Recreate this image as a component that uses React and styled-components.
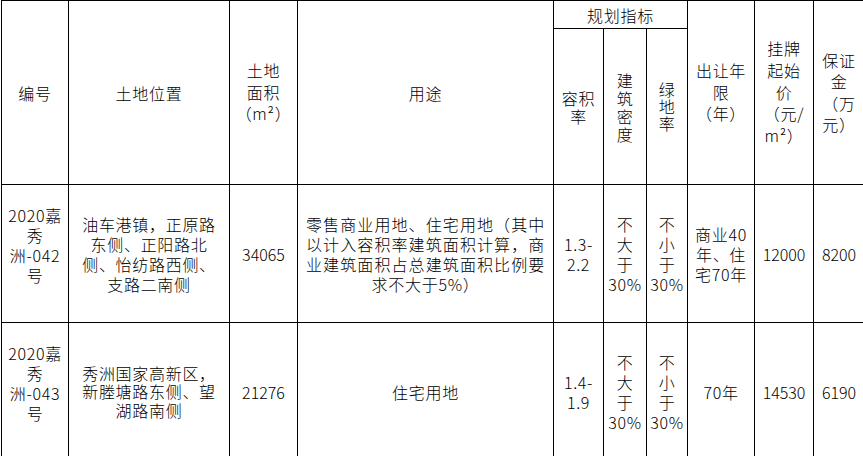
import React from 'react';
import styled, { createGlobalStyle, css } from 'styled-components';

const GlobalStyle = createGlobalStyle`
  html, body {
    margin: 0;
    padding: 0;
    background: #fff;
    overflow: hidden;
  }
  body {
    font-family: "Noto Sans CJK SC", "Liberation Sans", sans-serif;
    color: #000;
  }
`;

const Page = styled.div`
  padding-left: 1px;
`;

const Table = styled.table`
  border-collapse: collapse;
  table-layout: fixed;
  width: 863px;
  font-size: 16px;
  font-weight: 300;
  letter-spacing: 0.7px;
`;

const Row = styled.tr`
  height: ${(p) => p.$h}px;
`;

const cellBase = css`
  border: 1px solid #000;
  padding: 0 ${(p) => p.$pad ?? 3}px ${(p) => (p.$lift ? 18 : 0)}px;
  text-align: center;
  vertical-align: middle;
  line-height: ${(p) => p.$lh ?? 20}px;
  letter-spacing: ${(p) => (p.$num ? 0 : 0.7)}px;
  font-weight: 300;
`;

const Head = styled.th`
  ${cellBase}
`;

const Cell = styled.td`
  ${cellBase}
  ${(p) =>
    p.$justify &&
    css`
      text-align: justify;
      text-align-last: center;
    `}
`;

/* one line of a cell that the source breaks by hand */
const Line = styled.span`
  display: block;
  white-space: nowrap;
  overflow: visible;
`;

const Lines = ({ text }) =>
  text.split('\n').map((t, i) => <Line key={i}>{t}</Line>);

const widths = [67, 161, 68, 256, 50, 43, 41, 67, 59, 51];

const parcels = [
  {
    id: '2020嘉\n秀\n洲-042\n号',
    place: '油车港镇，正原路\n东侧、正阳路北\n侧、怡纺路西侧、\n支路二南侧',
    placeLh: 20,
    area: '34065',
    usage: '零售商业用地、住宅用地（其中以计入容积率建筑面积计算，商业建筑面积占总建筑面积比例要求不大于5%）',
    far: '1.3-\n2.2',
    term: '商业40\n年、住\n宅70年',
    price: '12000',
    deposit: '8200',
  },
  {
    id: '2020嘉\n秀\n洲-043\n号',
    place: '秀洲国家高新区，\n新塍塘路东侧、望\n湖路南侧',
    placeLh: 18.5,
    area: '21276',
    usage: '住宅用地',
    far: '1.4-\n1.9',
    term: '70年',
    price: '14530',
    deposit: '6190',
  },
];

export default function App() {
  return (
    <Page>
      <GlobalStyle />
      <Table>
        <colgroup>
          {widths.map((w, i) => (
            <col key={i} style={{ width: w }} />
          ))}
        </colgroup>
        <thead>
          <Row $h={28}>
            <Head rowSpan={2}>编号</Head>
            <Head rowSpan={2}>土地位置</Head>
            <Head rowSpan={2} $lh={21.5}>
              <Lines text={'土地\n面积\n（m²）'} />
            </Head>
            <Head rowSpan={2}>用途</Head>
            <Head colSpan={3}>规划指标</Head>
            <Head rowSpan={2} $lh={21.5}>
              <Lines text={'出让年\n限\n（年）'} />
            </Head>
            <Head rowSpan={2} $lh={21.8}>
              <Lines text={'挂牌\n起始\n价\n（元/\nm²）'} />
            </Head>
            <Head rowSpan={2} $lh={21.5}>
              <Lines text={'保证\n金\n（万\n元）'} />
            </Head>
          </Row>
          <Row $h={156}>
            <Head $lh={18}>
              <Lines text={'容积\n率'} />
            </Head>
            <Head $lh={18}>
              <Lines text={'建\n筑\n密\n度'} />
            </Head>
            <Head $lh={17}>
              <Lines text={'绿\n地\n率'} />
            </Head>
          </Row>
        </thead>
        <tbody>
          {parcels.map((p) => (
            <Row $h={138} key={p.area}>
              <Cell $lift>
                <Lines text={p.id} />
              </Cell>
              <Cell $lh={p.placeLh}>
                <Lines text={p.place} />
              </Cell>
              <Cell $num>{p.area}</Cell>
              <Cell $justify $pad={8}>
                {p.usage}
              </Cell>
              <Cell>
                <Lines text={p.far} />
              </Cell>
              <Cell>
                <Lines text={'不\n大\n于\n30%'} />
              </Cell>
              <Cell>
                <Lines text={'不\n小\n于\n30%'} />
              </Cell>
              <Cell>
                <Lines text={p.term} />
              </Cell>
              <Cell $num>{p.price}</Cell>
              <Cell $num>{p.deposit}</Cell>
            </Row>
          ))}
        </tbody>
      </Table>
    </Page>
  );
}
